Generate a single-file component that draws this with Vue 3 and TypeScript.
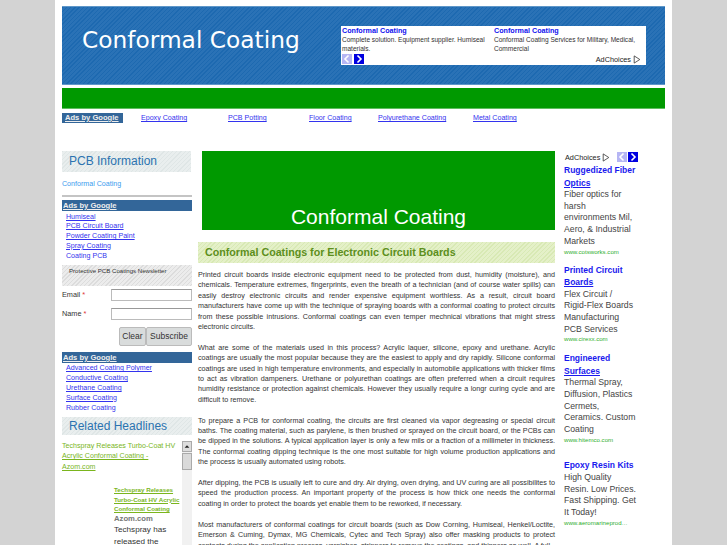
<template>
  <div class="page">
    <header class="banner">
      <h1 class="site-title">Conformal Coating</h1>
      <div class="top-ad">
        <div class="top-ad-cols">
          <div v-for="ad in topAds" :key="ad.text" class="top-ad-col">
            <a class="top-ad-title">{{ ad.title }}</a>
            <p>{{ ad.text }}</p>
          </div>
        </div>
        <div class="top-ad-foot">
          <span class="pager wide">
            <i class="pg off">
              <svg viewBox="0 0 10 10"><path d="M6.500 1.500 3 5l3.500 3.500" /></svg>
            </i>
            <i class="pg">
              <svg viewBox="0 0 10 10"><path d="M3.500 1.500 7 5 3.500 8.500" /></svg>
            </i>
          </span>
          <span class="adchoices">AdChoices
            <svg viewBox="0 0 10 11"><path d="M1.500 1v9L8.500 5.500z" /></svg>
          </span>
        </div>
      </div>
    </header>

    <div class="green-bar"></div>

    <nav class="link-row">
      <span class="abg">Ads by Google</span>
      <a v-for="l in topLinks" :key="l.text" :style="{ width: l.w + 'px' }">
        <u>{{ l.text }}</u>
      </a>
    </nav>

    <div class="columns">
      <aside class="left">
        <h3 class="side-head">PCB Information</h3>
        <a class="blue-link">Conformal Coating</a>
        <hr class="rule" />

        <div class="abg-wide"><u>Ads by Google</u></div>
        <ul class="ad-list">
          <li v-for="a in adsA" :key="a"><u>{{ a }}</u></li>
        </ul>

        <div class="news-head">Protective PCB Coatings Newsletter</div>
        <form class="news-form" @submit.prevent>
          <label class="field">
            <span>Email <b>*</b></span>
            <input type="text" />
          </label>
          <label class="field">
            <span>Name <b>*</b></span>
            <input type="text" />
          </label>
          <div class="btns">
            <button type="button" class="clear">Clear</button>
            <button type="button" class="sub">Subscribe</button>
          </div>
        </form>

        <div class="abg-wide second"><u>Ads by Google</u></div>
        <ul class="ad-list">
          <li v-for="a in adsB" :key="a"><u>{{ a }}</u></li>
        </ul>

        <h3 class="side-head related">Related Headlines</h3>
        <div class="feed">
          <div class="feed-body">
            <a class="feed-top">Techspray Releases Turbo-Coat HV <u>Acrylic Conformal Coating - Azom.com</u></a>
            <div class="feed-item">
              <a class="feed-title"><u>Techspray Releases Turbo-Coat HV Acrylic Conformal Coating</u></a>
              <div class="feed-src">Azom.com</div>
              <div class="feed-text">Techspray has released the</div>
            </div>
          </div>
          <div class="scrollbar">
            <span class="sb-btn">
              <svg viewBox="0 0 10 10"><path d="M2 6.500 5 3.500l3 3z" /></svg>
            </span>
            <span class="sb-thumb"></span>
          </div>
        </div>
      </aside>

      <main class="center">
        <div class="hero"><span>Conformal Coating</span></div>
        <h2 class="article-head">Conformal Coatings for Electronic Circuit Boards</h2>
        <p v-for="(para, i) in paragraphs" :key="i" class="para">{{ para }}</p>
      </main>

      <aside class="right">
        <div class="right-top">
          <span class="adchoices">AdChoices
            <svg viewBox="0 0 10 11"><path d="M1.500 1v9L8.500 5.500z" /></svg>
          </span>
          <span class="pager">
            <i class="pg off">
              <svg viewBox="0 0 10 10"><path d="M6.500 1.500 3 5l3.500 3.500" /></svg>
            </i>
            <i class="pg">
              <svg viewBox="0 0 10 10"><path d="M3.500 1.500 7 5 3.500 8.500" /></svg>
            </i>
          </span>
        </div>
        <div v-for="ad in sideAds" :key="ad.url" class="side-ad">
          <a class="side-ad-title">{{ ad.first }}<u v-if="ad.under">{{ ad.under }}</u></a>
          <p>{{ ad.text }}</p>
          <span class="side-ad-url">{{ ad.url }}</span>
        </div>
      </aside>
    </div>
  </div>
</template>

<script setup lang="ts">
const topAds = [
  {
    title: "Conformal Coating",
    text: "Complete solution. Equipment supplier. Humiseal materials.",
  },
  {
    title: "Conformal Coating",
    text: "Conformal Coating Services for Military, Medical, Commercial",
  },
];

const topLinks = [
  { text: "Epoxy Coating", w: 87 },
  { text: "PCB Potting", w: 81 },
  { text: "Floor Coating", w: 69 },
  { text: "Polyurethane Coating", w: 95 },
  { text: "Metal Coating", w: 60 },
];

const adsA = [
  "Humiseal",
  "PCB Circuit Board",
  "Powder Coating Paint",
  "Spray Coating",
  "Coating PCB",
];

const adsB = [
  "Advanced Coating Polymer",
  "Conductive Coating",
  "Urethane Coating",
  "Surface Coating",
  "Rubber Coating",
];

const sideAds = [
  {
    first: "Ruggedized Fiber ",
    under: "Optics",
    text: "Fiber optics for harsh environments Mil, Aero, & Industrial Markets",
    url: "www.cotsworks.com",
  },
  {
    first: "Printed Circuit ",
    under: "Boards",
    text: "Flex Circuit / Rigid-Flex Boards Manufacturing PCB Services",
    url: "www.cirexx.com",
  },
  {
    first: "Engineered ",
    under: "Surfaces",
    text: "Thermal Spray, Diffusion, Plastics Cermets, Ceramics. Custom Coating",
    url: "www.hitemco.com",
  },
  {
    first: "Epoxy Resin Kits",
    under: "",
    text: "High Quality Resin. Low Prices. Fast Shipping. Get It Today!",
    url: "www.aeromarineprod…",
  },
];

const paragraphs = [
  "Printed circuit boards inside electronic equipment need to be protected from dust, humidity (moisture), and chemicals. Temperature extremes, fingerprints, even the breath of a technician (and of course water spills) can easily destroy electronic circuits and render expensive equipment worthless. As a result, circuit board manufacturers have come up with the technique of spraying boards with a conformal coating to protect circuits from these possible intrusions. Conformal coatings can even temper mechnical vibrations that might stress electronic circuits.",
  "What are some of the materials used in this process? Acrylic laquer, silicone, epoxy and urethane. Acrylic coatings are usually the most popular because they are the easiest to apply and dry rapidly. Silicone conformal coatings are used in high temperature environments, and especially in automobile applications with thicker films to act as vibration dampeners. Urethane or polyurethan coatings are often preferred when a circuit requires humidity resistance or protection against chemicals. However they usually require a longr curing cycle and are difficult to remove.",
  "To prepare a PCB for conformal coating, the circuits are first cleaned via vapor degreasing or special circuit baths. The coating material, such as parylene, is then brushed or sprayed on the circuit board, or the PCBs can be dipped in the solutions. A typical application layer is only a few mils or a fraction of a millimeter in thickness. The conformal coating dipping technique is the one most suitable for high volume production applications and the process is usually automated using robots.",
  "After dipping, the PCB is usually left to cure and dry. Air drying, oven drying, and UV curing are all possibilites to speed the production process. An important property of the process is how thick one needs the conformal coating in order to protect the boards yet enable them to be reworked, if necessary.",
  "Most manufacturers of conformal coatings for circuit boards (such as Dow Corning, Humiseal, Henkel/Loctite, Emerson & Cuming, Dymax, MG Chemicals, Cytec and Tech Spray) also offer masking products to protect contacts during the application process, varnishes, strippers to remove the coatings, and thinners as well. A full",
];
</script>

<style>
html,
body {
  margin: 0;
  height: 100%;
  overflow: hidden;
  background: #d3d3d3;
}
</style>

<style scoped>
.page {
  width: 603px;
  height: 539px;
  margin-left: 55px;
  padding: 6px 7px 0;
  background: #fff;
  overflow: hidden;
  font-family: "Liberation Sans", Arial, sans-serif;
}

a {
  cursor: pointer;
}

/* Banner */
.banner {
  height: 77px;
  border: 1px solid #5f97c9;
  border-width: 1px 0;
  background: repeating-linear-gradient(135deg, #1d69b0 0 1px, #2a72b6 1px 3px);
  display: flex;
  align-items: flex-start;
  justify-content: space-between;
  padding-right: 19px;
}

.site-title {
  margin: 19px 0 0 20px;
  font: 400 23.300px "DejaVu Sans", Verdana, sans-serif;
  color: #fff;
}

.top-ad {
  width: 305px;
  height: 39px;
  margin-top: 19px;
  background: #fff;
  font-size: 6.550px;
  color: #333;
}

.top-ad-cols {
  display: flex;
  padding-left: 1px;
  height: 24px;
}

.top-ad-col {
  width: 152.500px;
}

.top-ad-title {
  display: block;
  font-weight: 700;
  font-size: 7.200px;
  line-height: 9px;
  color: #1111ee;
}

.top-ad-col p {
  margin: 1px 0 0;
  line-height: 8.500px;
}

.top-ad-foot {
  display: flex;
  justify-content: space-between;
  align-items: center;
  padding: 3px 5px 0 1px;
  height: 12px;
}

.pager {
  display: flex;
  gap: 1px;
}

.pager.wide {
  gap: 2px;
}

.pg {
  display: block;
  width: 10px;
  height: 10px;
  background: #0000e0;
}

.pg.off {
  background: #b6b6f4;
}

.pg svg {
  display: block;
  width: 10px;
  height: 10px;
  fill: none;
  stroke: #fff;
  stroke-width: 1.600;
}

.adchoices {
  display: flex;
  align-items: center;
  gap: 2px;
  font-size: 7.300px;
  color: #222;
}

.adchoices svg {
  width: 8px;
  height: 9px;
  fill: #fff;
  stroke: #333;
  stroke-width: 1;
}

.green-bar {
  height: 20px;
  margin-top: 3px;
  background: #009900;
  border-bottom: 1px solid #5fbf5f;
}

/* Links under bar */
.link-row {
  display: flex;
  align-items: center;
  height: 10px;
  margin-top: 3px;
  padding-top: 1px;
  font-size: 7.100px;
  color: #3333ee;
}

.abg {
  width: 61px;
  margin-right: 18px;
  background: #336699;
  color: #eee;
  font-weight: 700;
  font-size: 7.600px;
  line-height: 10px;
  padding-left: 3px;
  box-sizing: border-box;
  text-decoration: underline;
}

/* Columns */
.columns {
  display: flex;
  margin-top: 28px;
}

.left {
  width: 130px;
  margin-right: 6px;
  flex: none;
}

.center {
  width: 357px;
  margin-right: 9px;
  flex: none;
}

.right {
  width: 74px;
  flex: none;
}

/* Left column */
.side-head {
  margin: 0;
  width: 129px;
  height: 21px;
  padding-left: 7px;
  box-sizing: border-box;
  font: 400 12px/21px "Liberation Sans", Arial, sans-serif;
  color: #2b73b0;
  background: repeating-linear-gradient(135deg, #dfe6e6 0 1px, #e9eeee 1px 3px);
}

.blue-link {
  display: block;
  margin-top: 7px;
  font-size: 7.100px;
  line-height: 10px;
  color: #3a9bee;
}

.rule {
  margin: 6px 0 0;
  height: 2px;
  border: 0;
  background: #c4c4c4;
}

.abg-wide {
  margin-top: 3px;
  height: 11px;
  line-height: 11px;
  background: #336699;
  color: #eee;
  font-size: 7.600px;
  font-weight: 700;
  padding-left: 1px;
}

.ad-list {
  list-style: none;
  margin: 0;
  padding: 1.500px 0 0 4px;
  font-size: 7.100px;
  line-height: 9.800px;
  color: #3333ee;
}

.ad-list li:last-child u {
  text-decoration: none;
}

.news-head {
  margin-top: 3.500px;
  height: 21px;
  padding: 1px 0 0 7px;
  box-sizing: border-box;
  font-size: 6.100px;
  line-height: 10px;
  color: #333;
  background: repeating-linear-gradient(135deg, #dcdcdc 0 1px, #ececec 1px 3px);
}

.news-form {
  font-size: 7.300px;
  color: #333;
}

.field {
  display: flex;
  justify-content: space-between;
  align-items: center;
  margin-top: 3px;
  height: 12px;
}

.field + .field {
  margin-top: 7px;
}

.field b {
  font-weight: 400;
  color: #d33;
}

.field input {
  width: 81px;
  height: 12px;
  box-sizing: border-box;
  padding: 1px;
  border: 1px solid #bbb;
  border-top-color: #999;
  background: #fff;
  outline: 0;
}

.btns {
  display: flex;
  justify-content: flex-end;
  margin-top: 7px;
}

.btns button {
  height: 19px;
  padding: 0;
  border: 1px solid #bbb;
  border-radius: 2px;
  background: #d9dcdc;
  color: #333;
  font: 8.500px "Liberation Sans", Arial, sans-serif;
}

.btns .clear {
  width: 27px;
}

.btns .sub {
  width: 46px;
}

.second {
  margin-top: 6px;
}

.related {
  width: 130px;
  height: 18px;
  margin-top: 3.500px;
  line-height: 18px;
}

.feed {
  display: flex;
  height: 200px;
}

.feed-body {
  width: 120px;
  flex: none;
  font-size: 7.100px;
  padding-top: 6px;
}

.feed-top {
  display: block;
  line-height: 10.500px;
  color: #7ab51d;
}

.feed-item {
  margin: 13px 0 0 52px;
}

.feed-title {
  display: block;
  font-size: 6.200px;
  font-weight: 700;
  line-height: 9.200px;
  color: #7ab51d;
}

.feed-src {
  font-size: 7.700px;
  font-weight: 700;
  line-height: 11px;
  color: #777;
}

.feed-text {
  font-size: 8.100px;
  line-height: 11.500px;
  color: #333;
}

.scrollbar {
  width: 10px;
  margin-top: 6px;
  flex: none;
  background: #f1f1f1;
  display: flex;
  flex-direction: column;
}

.sb-btn {
  display: block;
  height: 11px;
  background: #ddd;
  border: 1px solid #aaa;
  box-sizing: border-box;
}

.sb-btn svg {
  display: block;
  width: 8px;
  height: 9px;
  fill: #222;
}

.sb-thumb {
  display: block;
  height: 17px;
  margin-top: 1px;
  background: #dadada;
  border: 1px solid #aaa;
  box-sizing: border-box;
}

/* Center */
.hero {
  margin-left: 4px;
  width: 353px;
  height: 79px;
  background: #009900;
  box-sizing: border-box;
  display: flex;
  align-items: flex-end;
  justify-content: center;
  color: #fff;
  font-size: 21px;
  line-height: 24px;
  padding-bottom: 1px;
}

.article-head {
  margin: 12px 0 0;
  height: 21px;
  line-height: 21px;
  padding-left: 7px;
  font-size: 10.700px;
  font-weight: 700;
  color: #5d8f1c;
  background: repeating-linear-gradient(135deg, #d8e9b4 0 1px, #e4f0c8 1px 3px);
}

.para {
  margin: 7px 0 10.400px;
  font-size: 7.200px;
  line-height: 10.400px;
  text-align: justify;
  color: #333;
}

.para + .para {
  margin-top: 10.400px;
}

/* Right column */
.right-top {
  display: flex;
  justify-content: space-between;
  height: 10px;
  margin-top: 1px;
  margin-bottom: 2px;
  padding-left: 1px;
}

.side-ad {
  width: 73px;
  margin-bottom: 9px;
  font-size: 8.700px;
  line-height: 11.700px;
  color: #444;
}

.side-ad:nth-child(2) {
  margin-bottom: 8px;
}

.side-ad:nth-child(4) {
  margin-bottom: 15.500px;
}

.side-ad-title {
  display: block;
  color: #1a1aee;
  font-size: 8.500px;
  font-weight: 700;
  line-height: 12.500px;
}

.side-ad p {
  margin: 0;
}

.side-ad-url {
  display: block;
  font-size: 6.100px;
  line-height: 8px;
  color: #2fae2f;
}
</style>
